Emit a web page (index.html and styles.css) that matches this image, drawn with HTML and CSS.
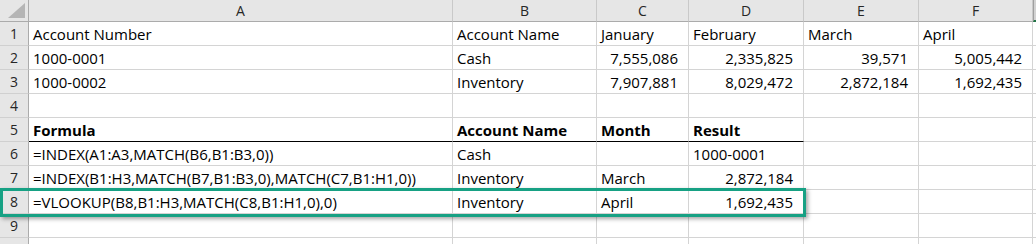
FILE: index.html
```html
<!DOCTYPE html>
<html>
<head>
<meta charset="utf-8">
<link rel="stylesheet" href="styles.css">
</head>
<body>
<div class="sheet">
  <div class="grid">
    <div class="hd corner"><span class="tri"></span></div>
    <div class="hd col">A</div>
    <div class="hd col">B</div>
    <div class="hd col">C</div>
    <div class="hd col">D</div>
    <div class="hd col">E</div>
    <div class="hd col">F</div>
    <div class="hd col sel"></div>

    <div class="rn">1</div>
    <div class="c">Account Number</div>
    <div class="c">Account Name</div>
    <div class="c">January</div>
    <div class="c">February</div>
    <div class="c">March</div>
    <div class="c">April</div>
    <div class="c"></div>

    <div class="rn">2</div>
    <div class="c">1000-0001</div>
    <div class="c">Cash</div>
    <div class="c n">7,555,086</div>
    <div class="c n">2,335,825</div>
    <div class="c n">39,571</div>
    <div class="c n">5,005,442</div>
    <div class="c"></div>

    <div class="rn">3</div>
    <div class="c">1000-0002</div>
    <div class="c">Inventory</div>
    <div class="c n">7,907,881</div>
    <div class="c n">8,029,472</div>
    <div class="c n">2,872,184</div>
    <div class="c n">1,692,435</div>
    <div class="c"></div>

    <div class="rn">4</div>
    <div class="c"></div><div class="c"></div><div class="c"></div><div class="c"></div><div class="c"></div><div class="c"></div><div class="c"></div>

    <div class="rn">5</div>
    <div class="c b ul">Formula</div>
    <div class="c b ul">Account Name</div>
    <div class="c b ul">Month</div>
    <div class="c b ul">Result</div>
    <div class="c"></div><div class="c"></div><div class="c"></div>

    <div class="rn">6</div>
    <div class="c">=INDEX(A1:A3,MATCH(B6,B1:B3,0))</div>
    <div class="c">Cash</div>
    <div class="c"></div>
    <div class="c">1000-0001</div>
    <div class="c"></div><div class="c"></div><div class="c"></div>

    <div class="rn">7</div>
    <div class="c">=INDEX(B1:H3,MATCH(B7,B1:B3,0),MATCH(C7,B1:H1,0))</div>
    <div class="c">Inventory</div>
    <div class="c">March</div>
    <div class="c n">2,872,184</div>
    <div class="c"></div><div class="c"></div><div class="c"></div>

    <div class="rn">8</div>
    <div class="c">=VLOOKUP(B8,B1:H3,MATCH(C8,B1:H1,0),0)</div>
    <div class="c">Inventory</div>
    <div class="c">April</div>
    <div class="c n">1,692,435</div>
    <div class="c"></div><div class="c"></div><div class="c"></div>

    <div class="rn">9</div>
    <div class="c"></div><div class="c"></div><div class="c"></div><div class="c"></div><div class="c"></div><div class="c"></div><div class="c"></div>

    <div class="rn"></div>
    <div class="c"></div><div class="c"></div><div class="c"></div><div class="c"></div><div class="c"></div><div class="c"></div><div class="c"></div>
  </div>
  <div class="highlight"></div>
</div>
</body>
</html>
```

FILE: styles.css
```css
html, body {
  margin: 0;
  padding: 0;
  background: #ffffff;
  overflow: hidden;
}

.sheet {
  position: relative;
  width: 1036px;
  height: 244px;
  overflow: hidden;
  font-family: "Open Sans", "Liberation Sans", sans-serif;
  color: #000000;
}

.grid {
  display: grid;
  grid-template-columns: 29px 424px 144px 92px 115px 115px 114px 3px;
  grid-template-rows: 22px repeat(10, 24px);
}

.grid > div {
  box-sizing: border-box;
  white-space: nowrap;
  overflow: visible;
}

.hd {
  background: #e6e6e6;
  border-bottom: 1px solid #ababab;
  border-right: 1px solid #c9c9c9;
  font-size: 14px;
  color: #262626;
  display: flex;
  align-items: center;
  justify-content: center;
  line-height: 20px;
}

.corner {
  position: relative;
  border-right: 1px solid #ababab;
}

.tri {
  position: absolute;
  right: 3px;
  bottom: 3px;
  width: 0;
  height: 0;
  border-style: solid;
  border-width: 0 0 15px 17px;
  border-color: transparent transparent #b5b5b5 transparent;
}

.col.sel {
  background: #d2d2d2;
  border-left: 1px solid #9f9f9f;
  border-right: none;
  border-bottom: 2px solid #217346;
}

.rn {
  background: #e6e6e6;
  border-right: 1px solid #ababab;
  border-bottom: 1px solid #d0d0d0;
  font-size: 14px;
  color: #262626;
  display: flex;
  align-items: flex-end;
  justify-content: center;
  line-height: 20px;
  padding-bottom: 1px;
}

.c {
  border-right: 1px solid #d4d4d4;
  border-bottom: 1px solid #d4d4d4;
  font-size: 15px;
  line-height: 20px;
  display: flex;
  align-items: flex-end;
  padding: 0 3px 1px 4px;
}

.c.n {
  justify-content: flex-end;
  padding-right: 10px;
}

.c.b {
  font-weight: 700;
}

.c.ul {
  border-bottom-color: #000000;
}

.highlight {
  position: absolute;
  left: 0;
  top: 188px;
  width: 806px;
  height: 29px;
  box-sizing: border-box;
  border: 3px solid #17a184;
  box-shadow: 2px 2px 4px rgba(0, 0, 0, 0.35);
}
```
